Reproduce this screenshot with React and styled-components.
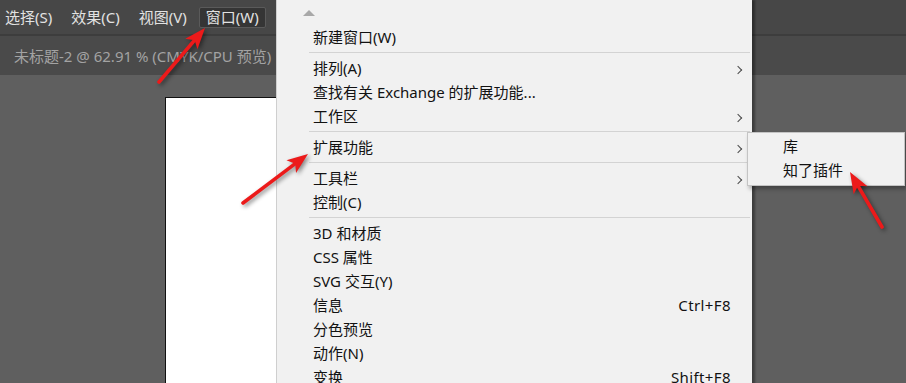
import React from 'react';
import styled, { createGlobalStyle } from 'styled-components';

const GlobalStyle = createGlobalStyle`
  body {
    margin: 0;
    background: #5f5f5f;
    font-family: "Noto Sans", "Noto Sans CJK SC", sans-serif;
  }
`;

const menuItems = [
  { label: '新建窗口(W)' },
  'sep',
  { label: '排列(A)', sub: true },
  { label: '查找有关 Exchange 的扩展功能...' },
  { label: '工作区', sub: true },
  'sep',
  { label: '扩展功能', sub: true },
  'sep',
  { label: '工具栏', sub: true },
  { label: '控制(C)' },
  'sep',
  { label: '3D 和材质' },
  { label: 'CSS 属性' },
  { label: 'SVG 交互(Y)' },
  { label: '信息', shortcut: 'Ctrl+F8' },
  { label: '分色预览' },
  { label: '动作(N)' },
  { label: '变换', shortcut: 'Shift+F8' },
];

function Arrow({ x1, y1, x2, y2 }) {
  const dx = x2 - x1;
  const dy = y2 - y1;
  const len = Math.hypot(dx, dy);
  const ux = dx / len;
  const uy = dy / len;
  const bx = x2 - ux * 21;
  const by = y2 - uy * 21;
  const nx = bx + ux * 5;
  const ny = by + uy * 5;
  const px = -uy * 8;
  const py = ux * 8;
  const head = `${x2},${y2} ${bx + px},${by + py} ${nx},${ny} ${bx - px},${by - py}`;
  return (
    <g>
      <line x1={x1} y1={y1} x2={nx} y2={ny} stroke="#ec1a1a" strokeWidth="3.6" strokeLinecap="round" />
      <polygon points={head} fill="#ec1a1a" />
    </g>
  );
}

export default function App() {
  return (
    <Screen>
      <GlobalStyle />
      <MenuBar>
        <MenuBarItem>选择(S)</MenuBarItem>
        <MenuBarItem>效果(C)</MenuBarItem>
        <MenuBarItem>视图(V)</MenuBarItem>
        <MenuBarItem $active>窗口(W)</MenuBarItem>
      </MenuBar>
      <TabBar>
        <TabTitle>未标题-2 @ 62.91 % (CMYK/CPU 预览)</TabTitle>
      </TabBar>
      <Canvas>
        <Artboard />
      </Canvas>

      <Menu>
        <MenuCaret />
        {menuItems.map((item, i) =>
          item === 'sep' ? (
            <Separator key={i} />
          ) : (
            <Row key={i}>
              <Label>{item.label}</Label>
              <Shortcut>{item.shortcut}</Shortcut>
              <ChevronCell>{item.sub && <Chevron />}</ChevronCell>
            </Row>
          )
        )}
      </Menu>

      <SubMenu>
        <SubRow>库</SubRow>
        <SubRow>知了插件</SubRow>
      </SubMenu>

      <Arrows viewBox="0 0 906 383">
        <Arrow x1={159} y1={82} x2={205} y2={28} />
        <Arrow x1={243} y1={203} x2={308} y2={154} />
        <Arrow x1={882} y1={227} x2={850} y2={172} />
      </Arrows>
    </Screen>
  );
}

const Screen = styled.div`
  position: relative;
  width: 906px;
  height: 383px;
  overflow: hidden;
  display: flex;
  flex-direction: column;
  background: #5f5f5f;
`;

const MenuBar = styled.div`
  height: 36px;
  display: flex;
  align-items: center;
  gap: 5px;
  margin-left: -2px;
  background: #474747;
  border-bottom: 2px solid #3d3d3d;
  box-sizing: border-box;
`;

const MenuBarItem = styled.div`
  height: 21px;
  display: flex;
  align-items: center;
  padding: 0 6px 1px;
  box-sizing: border-box;
  border: 1px solid ${(p) => (p.$active ? '#5a5a5a' : 'transparent')};
  border-radius: 2px;
  background: ${(p) => (p.$active ? '#353535' : 'transparent')};
  color: #e2e2e2;
  font-size: 15px;
  white-space: nowrap;
`;

const TabBar = styled.div`
  height: 39px;
  display: flex;
  align-items: center;
  padding-left: 14px;
  background: #4a4a4a;
  box-sizing: border-box;
`;

const TabTitle = styled.span`
  color: #a3a3a3;
  font-size: 15px;
  white-space: nowrap;
`;

const Canvas = styled.div`
  flex: 1;
  padding: 22px 0 0 165px;
  background: #5f5f5f;
  display: flex;
`;

const Artboard = styled.div`
  width: 400px;
  background: #ffffff;
  border: 1px solid #111;
  border-bottom: none;
`;

const Menu = styled.div`
  position: absolute;
  left: 276px;
  top: 0;
  width: 476px;
  height: 400px;
  background: #f1f1f1;
  border-left: 1px solid #cfcfcf;
  box-sizing: border-box;
  box-shadow: 3px 0 2px rgba(0, 0, 0, 0.35);
  padding-top: 10px;
`;

const MenuCaret = styled.div`
  width: 0;
  height: 0;
  margin: 0 0 10px 26px;
  border-left: 6px solid transparent;
  border-right: 6px solid transparent;
  border-bottom: 6px solid #a8a8a8;
`;

const Row = styled.div`
  height: 24px;
  box-sizing: border-box;
  padding-bottom: 4px;
  display: grid;
  grid-template-columns: 1fr auto 21px;
  align-items: center;
  padding-left: 36px;
  font-size: 15px;
  color: #121212;
  white-space: nowrap;
`;

const Label = styled.span``;

const Shortcut = styled.span`
  text-align: right;
  letter-spacing: 0.4px;
`;

const ChevronCell = styled.span`
  display: flex;
  align-items: center;
  padding-left: 6px;
  padding-top: 4px;
`;

const Chevron = styled.span`
  width: 5px;
  height: 5px;
  border-right: 1.5px solid #4a4a4a;
  border-top: 1.5px solid #4a4a4a;
  transform: rotate(45deg);
  margin-left: -2px;
`;

const Separator = styled.div`
  height: 1px;
  margin: 2px 2px 4px 32px;
  background: #d3d3d3;
`;

const SubMenu = styled.div`
  position: absolute;
  left: 747px;
  top: 132px;
  width: 158px;
  height: 54px;
  box-sizing: border-box;
  background: #f1f1f1;
  border: 1px solid #c4c4c4;
  padding-top: 2px;
  box-shadow: 2px 3px 4px rgba(0, 0, 0, 0.3);
`;

const SubRow = styled.div`
  height: 24px;
  box-sizing: border-box;
  padding-bottom: 4px;
  display: flex;
  align-items: center;
  padding-left: 35px;
  font-size: 15px;
  color: #121212;
`;

const Arrows = styled.svg`
  position: absolute;
  left: 0;
  top: 0;
  width: 906px;
  height: 383px;
  pointer-events: none;
  filter: drop-shadow(2px 2px 2px rgba(0, 0, 0, 0.45));
`;
